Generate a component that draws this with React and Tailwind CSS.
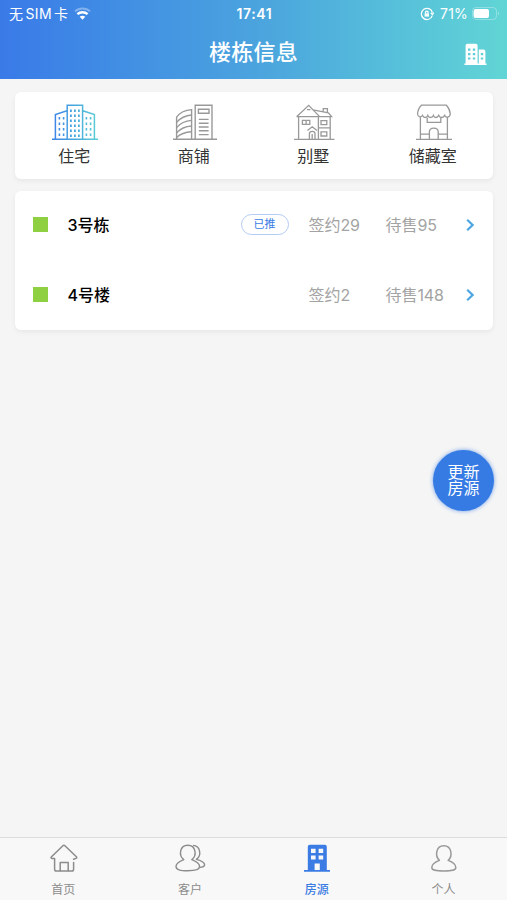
import React from 'react';

const ResidentialIcon = () => (
    <svg width="46" height="37" viewBox="0 0 46 37" fill="none" stroke="url(#resi)" strokeWidth="1.5">
        <defs>
            <linearGradient id="resi" gradientUnits="userSpaceOnUse" x1="0" y1="0" x2="46" y2="0">
                <stop stopColor="#3b82e8" />
                <stop offset="1" stopColor="#5bcfd4" />
            </linearGradient>
        </defs>
        <path d="M0 35.2H46M15.2 35V1.2H30.6V35M3.4 35V10.6L15 6.8M30.8 6.8L42.4 10.6V35" />
        <path d="M18.9 5.5V33M22.9 5.5V33M26.9 5.5V33" strokeWidth="1.8" strokeDasharray="2.4 2.6" />
        <path d="M7.4 13V33M11.6 13V33M34.4 13V33M38.6 13V33" strokeWidth="1.6" strokeDasharray="2.4 3.1" />
    </svg>
);

const ShopIcon = () => (
    <svg width="44" height="37" viewBox="0 0 44 37" fill="none" stroke="#999" strokeWidth="1.4">
        <path d="M0 35.2H44M22.2 35V1.2H39V35M3.6 35V13.2C7 8.5 12 6 18.6 5.6V35" />
        <path d="M3.6 18.4C7.5 13.8 12 11.5 18.6 11M3.6 23.6C7.5 19 12 16.9 18.6 16.4M3.6 28.8C7.5 24.5 12 22.4 18.6 22M3.6 33.6C7.5 29.8 12 28.2 18.6 27.8" />
        <path d="M25.4 5.2H36V9.2H25.4zM25.8 15.4H35.6M25.8 19.2H35.6M25.8 23H35.6M25.8 26.8H35.6M25.8 30.6H35.6" />
    </svg>
);

const VillaIcon = () => (
    <svg width="41" height="37" viewBox="0 0 41 37" fill="none" stroke="#999" strokeWidth="1.3">
        <path d="M0 35.4H40.5M4.6 35V12.6M2.6 12.8L14.7 1.4L25.6 12.6M2.6 12.6H37.6L34.4 8.8L19 5.8M24.4 12.6V35M36.2 12.6V35M24.4 23.8H36.2M29.2 7.6V4.6H33.4V8.6" />
        <path d="M8.4 16.4H15.8V20.4H8.4zM12.1 16.4V20.4M27 16.6H32.8V20.6H27zM27 27.8H32.8V32H27zM13 5.6H16.4" />
        <path d="M13.4 26.4L18.2 22.8L23 26.4M15.4 35V29.6C15.4 26.6 21 26.6 21 29.6V35M18.2 30V35" />
    </svg>
);

const StorageIcon = () => (
    <svg width="36" height="37" viewBox="0 0 36 37" fill="none" stroke="#999" strokeWidth="1.3">
        <path d="M0 35.4H36M4.4 35V13.4M31.4 35V13.4M5.4 1.2H30.4C32.6 3.4 34 6.6 34.3 10C33.8 13.8 29.8 14.2 28.8 11.4C27.4 14.2 23.8 14.2 22.8 11.4C21.4 14.2 18.2 14.2 17.4 11.4C16.2 14.2 12.8 14.2 11.8 11.4C10.6 14.2 7.6 14.2 6.6 11.4C4.6 14 2 12.8 1.5 10C1.9 6.6 3 3.4 5.4 1.2z" />
        <path d="M11.2 13.6V18.4H24.8V13.6M4.4 30.2H13.4M22.2 30.2H31.4M13.4 35V28C13.4 22.8 22.2 22.8 22.2 28V35" />
    </svg>
);

const HomeIcon = () => (
    <svg width="28" height="29" viewBox="0 0 28 29" fill="none" stroke="#8c8c8c" strokeWidth="1.5" strokeLinejoin="round" strokeLinecap="round">
        <path d="M4.6 14.4H2C.9 14.2.8 13.4 1.5 12.7L12.9 1.7Q13.9.9 14.9 1.7L26.4 12.7C27.1 13.5 26.7 14.3 25.8 14.4L23.6 15.2M4.6 14.4V25.2Q4.6 27 6.4 27H21.8Q23.6 27 23.6 25.2V18.4" />
        <path d="M10.2 26.8V18.4H18.2V26.8" />
    </svg>
);

const personPath = 'M8.8 15.6C3.4 11.6 4.6 1.2 12.8 1.2S22.2 11.6 16.8 15.6C21 17.2 24.6 19.4 24.6 22.6C24.6 25.8 20.6 26.8 12.8 26.8S1 25.8 1 22.6C1 19.4 4.6 17.2 8.8 15.6z';

const CustomersIcon = () => (
    <svg width="31" height="29" viewBox="0 0 31 29" fill="none" stroke="#8c8c8c" strokeWidth="1.4" strokeLinejoin="round">
        <path d={personPath} />
        <path d="M18 1.4C25.6 1.8 26.8 11.4 21.4 15.4C25.6 16.6 29.6 18.4 29.6 20.8C29.4 22.4 27.4 23.2 24.8 23.4" />
    </svg>
);

const HousesIcon = () => (
    <svg width="26" height="29" viewBox="0 0 26 29" fill="#3a7ce4">
        <path fillRule="evenodd" d="M5.8.8H20.8Q22.8.8 22.8 2.8V26H26V27.8H0V26H3.8V2.8Q3.8.8 5.8.8zM7 4.8V9H11.6V4.8zM14.6 4.8V9H19.2V4.8zM7 11.4V15.6H11.6V11.4zM14.6 11.4V15.6H19.2V11.4zM10.6 19.4V26H15.8V19.4z" />
    </svg>
);

const ProfileIcon = () => (
    <svg width="26" height="29" viewBox="0 0 26 29" fill="none" stroke="#999" strokeWidth="1.5" strokeLinejoin="round">
        <path d="M8.4 16.4C3.6 11.8 5 1.8 12.8 1.8S22 11.8 17.2 16.4C21.6 18 24.8 20.2 24.8 23.6C24.8 26.4 21 27 12.8 27S.8 26.4.8 23.6C.8 20.2 4 18 8.4 16.4z" />
    </svg>
);

const categories = [
    { label: '住宅', Icon: ResidentialIcon },
    { label: '商铺', Icon: ShopIcon },
    { label: '别墅', Icon: VillaIcon },
    { label: '储藏室', Icon: StorageIcon },
];

const buildings = [
    { name: '3号栋', pushed: true, signed: 29, onSale: 95 },
    { name: '4号楼', pushed: false, signed: 2, onSale: 148 },
];

const tabs = [
    { label: '首页', Icon: HomeIcon },
    { label: '客户', Icon: CustomersIcon },
    { label: '房源', Icon: HousesIcon, active: true },
    { label: '个人', Icon: ProfileIcon },
];

const StatusBar = () => (
    <div className="grid h-[27px] grid-cols-3 items-center pl-[9px] pr-[7px] text-[14px]">
        <div className="flex items-center">
            <span className="whitespace-nowrap tracking-[0.4px]">无<span className="mx-[2px]">SIM</span>卡</span>
            <svg className="ml-[6px]" width="17" height="13" viewBox="0 0 17 13" fill="none" stroke="#fff" strokeWidth="2">
                <path d="M1 4.4C5.2.4 11.8.4 16 4.4" opacity=".35" />
                <path d="M3.4 7.2C6.2 4.5 10.8 4.5 13.6 7.2" strokeWidth="2.4" />
                <path d="M5.7 9.8C7.3 8.3 9.7 8.3 11.3 9.8L8.5 12.8z" fill="#fff" stroke="none" />
            </svg>
        </div>
        <div className="text-center font-semibold tracking-[0.6px]">17:41</div>
        <div className="flex items-center justify-end">
            <svg width="14" height="14" viewBox="0 0 14 14" fill="none" stroke="#fff" strokeWidth="1.3">
                <path d="M12.3 8.6A5.6 5.6 0 1 1 12.4 5.6M10.8 6L12.5 7.6L13.8 5.6" />
                <path d="M4.6 6.4H9V9.6H4.6z" fill="#fff" stroke="none" />
                <path d="M5.5 6.6V5.4C5.5 3.8 8.1 3.8 8.1 5.4V6.6" />
            </svg>
            <span className="ml-[6px] tracking-[0.2px]">71%</span>
            <svg className="ml-1" width="28" height="13" viewBox="0 0 28 13">
                <rect x=".5" y=".5" width="24" height="12" rx="3.4" fill="none" stroke="#fff" opacity=".3" />
                <rect x="1.6" y="2" width="15.4" height="9" rx="2" fill="#fff" />
                <path d="M26 4.5Q28 6.5 26 8.5z" fill="#fff" opacity=".4" />
            </svg>
        </div>
    </div>
);

const Header = () => (
    <header className="h-[79px] shrink-0 bg-linear-to-r from-[#3a7ae8] via-[#4ba3de] to-[#61d5d5] text-white">
        <StatusBar />
        <div className="grid h-[50px] grid-cols-[1fr_auto_1fr] items-center pr-5">
            <h1 className="col-start-2 ml-5 text-[22px] font-medium leading-none tracking-[0.3px]">楼栋信息</h1>
            <svg className="mt-1 justify-self-end" width="23" height="23" viewBox="0 0 23 23" fill="#fff">
                <path fillRule="evenodd" d="M3.4.8H11.8Q13.6.8 13.6 2.6V20.4H14.8V6.6H19.6Q21.4 6.6 21.4 8.4V20.4H22.6V22H.4V20.4H1.6V2.6Q1.6.8 3.4.8zM4 5.6V7.8H6.4V5.6zM8.8 5.6V7.8H11.2V5.6zM4 10V12.2H6.4V10zM8.8 10V12.2H11.2V10zM4 14.4V16.6H6.4V14.4zM8.8 14.4V16.6H11.2V14.4zM16.8 10V12.2H19.2V10zM16.8 14.4V16.6H19.2V14.4z" />
            </svg>
        </div>
    </header>
);

const BuildingRow = ({ building }) => (
    <div className="flex h-[70px] items-center pl-[18px] pr-[18px]">
        <span className="size-[15px] bg-[#8fd042]" />
        <span className="ml-5 text-base font-medium text-black">{building.name}</span>
        {building.pushed && (
            <span className="ml-auto mr-5 flex h-[21px] w-12 items-center justify-center rounded-full border border-[#b4cbf5] text-[11px] text-[#3a7ce4]">
                已推
            </span>
        )}
        <div className={building.pushed ? 'w-[77px] text-base text-[#a3a3a3]' : 'ml-auto w-[77px] text-base text-[#a3a3a3]'}>
            签约<span className="tracking-[-0.2px]">{building.signed}</span>
        </div>
        <div className="w-20 text-base text-[#a3a3a3]">
            待售<span className="tracking-[-0.2px]">{building.onSale}</span>
        </div>
        <svg width="9" height="14" viewBox="0 0 9 14" fill="none" stroke="#4aa5e2" strokeWidth="2.2">
            <path d="M1.2 1.8L6.6 7L1.2 12.2" />
        </svg>
    </div>
);

const App = () => (
    <div className="relative flex h-[900px] w-[507px] flex-col overflow-hidden bg-[#f5f5f5] font-[Inter,'Noto_Sans_CJK_SC',sans-serif]">
        <Header />

        <main className="flex flex-1 flex-col gap-3 px-[14.5px] pt-[13px]">
            <section className="grid h-[87px] grid-cols-4 rounded-md bg-white shadow-[0_2px_5px_rgba(0,0,0,0.06)]">
                {categories.map(({ label, Icon }) => (
                    <div key={label} className="flex flex-col items-center pt-3">
                        <div className="pl-[2px]">
                            <Icon />
                        </div>
                        <span className="mt-[3px] text-base leading-6 text-[#333]">{label}</span>
                    </div>
                ))}
            </section>

            <section className="h-[139px] rounded-md bg-white shadow-[0_2px_5px_rgba(0,0,0,0.06)]">
                <div className="-mt-[1.5px]">
                    {buildings.map((building) => (
                        <BuildingRow key={building.name} building={building} />
                    ))}
                </div>
            </section>
        </main>

        <nav className="grid h-[63px] shrink-0 grid-cols-4 border-t border-[#dcdcdc] bg-[#f8f8f8]">
            {tabs.map(({ label, Icon, active }) => (
                <div key={label} className="flex flex-col items-center pt-[6px]">
                    <div className="h-[29px] pl-px">
                        <Icon />
                    </div>
                    <span className={active ? 'mt-[9px] text-xs font-medium text-[#3a7ce4]' : 'mt-[9px] text-xs text-[#8c8c8c]'}>{label}</span>
                </div>
            ))}
        </nav>

        <button className="absolute left-[433px] top-[450px] flex size-[61px] flex-col items-center justify-center rounded-full bg-[#367ae4] pb-[2px] text-base leading-4 text-white shadow-[0_0_4px_rgba(54,122,228,0.7)]">
            <span className="block h-4">更新</span>
            <span className="block h-4">房源</span>
        </button>
    </div>
);

export default App;
